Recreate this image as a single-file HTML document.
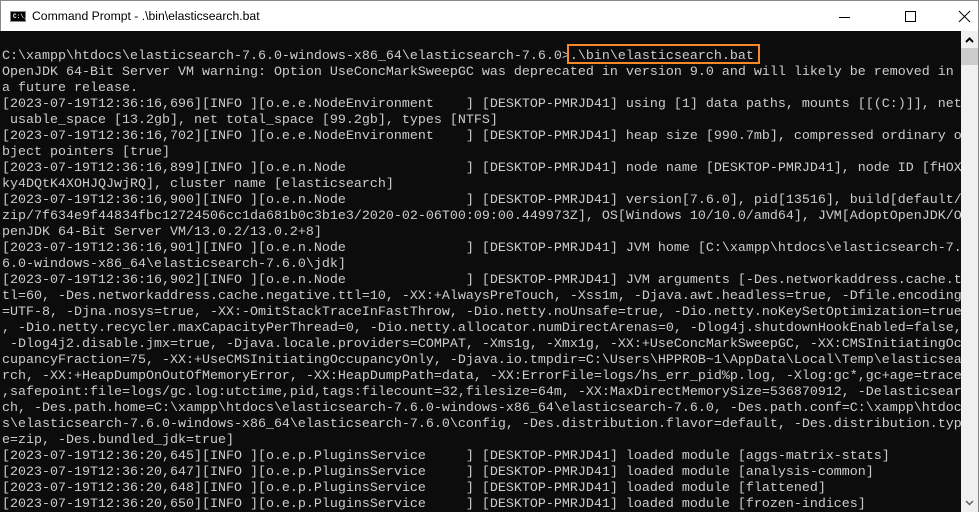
<!DOCTYPE html>
<html><head><meta charset="utf-8"><style>
*{margin:0;padding:0;box-sizing:border-box}
body{width:979px;height:512px;overflow:hidden;background:#fff;position:relative;font-family:"Liberation Sans",sans-serif}
#title{position:absolute;left:0;top:0;width:979px;height:31px;background:#fff;border:1px solid #888;border-bottom:none}
#title .t{position:absolute;left:31px;top:8px;font-size:12.2px;color:#000}
#icon{position:absolute;left:9px;top:10px;width:16px;height:11px;background:#000;border:1px solid #888}
#icon span{position:absolute;left:2px;top:1px;color:#fff;font:bold 6px "Liberation Mono",monospace}
#con{position:absolute;left:0;top:31px;width:961px;height:481px;background:#0c0c0c;overflow:hidden}
pre{position:absolute;left:2px;top:18px;font-family:"Liberation Mono",monospace;font-size:13.33px;line-height:16px;color:#cccccc;white-space:pre}
#sb{position:absolute;left:961px;top:31px;width:17px;height:481px;background:#f0f0f0}
#thumb{position:absolute;left:961px;top:48px;width:17px;height:17px;background:#cdcdcd}
#rb{position:absolute;left:978px;top:0;width:1px;height:512px;background:#888}
#box{position:absolute;left:567px;top:44px;width:193px;height:20px;border:2px solid #f5882b}
</style></head><body>
<div id="title"><div id="icon"><span>C:\_</span></div><div class="t">Command Prompt - .\bin\elasticsearch.bat</div>
<svg style="position:absolute;left:835px;top:8px" width="140" height="16">
<line x1="3" y1="8.5" x2="14" y2="8.5" stroke="#000" stroke-width="1"/>
<rect x="69.5" y="2.5" width="10" height="10" fill="none" stroke="#000"/>
<line x1="123" y1="2" x2="134" y2="13" stroke="#000"/><line x1="134" y1="2" x2="123" y2="13" stroke="#000"/>
</svg></div>
<div id="con"><pre>C:\xampp\htdocs\elasticsearch-7.6.0-windows-x86_64\elasticsearch-7.6.0&gt;.\bin\elasticsearch.bat
OpenJDK 64-Bit Server VM warning: Option UseConcMarkSweepGC was deprecated in version 9.0 and will likely be removed in
a future release.
[2023-07-19T12:36:16,696][INFO ][o.e.e.NodeEnvironment    ] [DESKTOP-PMRJD41] using [1] data paths, mounts [[(C:)]], net
 usable_space [13.2gb], net total_space [99.2gb], types [NTFS]
[2023-07-19T12:36:16,702][INFO ][o.e.e.NodeEnvironment    ] [DESKTOP-PMRJD41] heap size [990.7mb], compressed ordinary o
bject pointers [true]
[2023-07-19T12:36:16,899][INFO ][o.e.n.Node               ] [DESKTOP-PMRJD41] node name [DESKTOP-PMRJD41], node ID [fHOX
ky4DQtK4XOHJQJwjRQ], cluster name [elasticsearch]
[2023-07-19T12:36:16,900][INFO ][o.e.n.Node               ] [DESKTOP-PMRJD41] version[7.6.0], pid[13516], build[default/
zip/7f634e9f44834fbc12724506cc1da681b0c3b1e3/2020-02-06T00:09:00.449973Z], OS[Windows 10/10.0/amd64], JVM[AdoptOpenJDK/O
penJDK 64-Bit Server VM/13.0.2/13.0.2+8]
[2023-07-19T12:36:16,901][INFO ][o.e.n.Node               ] [DESKTOP-PMRJD41] JVM home [C:\xampp\htdocs\elasticsearch-7.
6.0-windows-x86_64\elasticsearch-7.6.0\jdk]
[2023-07-19T12:36:16,902][INFO ][o.e.n.Node               ] [DESKTOP-PMRJD41] JVM arguments [-Des.networkaddress.cache.t
tl=60, -Des.networkaddress.cache.negative.ttl=10, -XX:+AlwaysPreTouch, -Xss1m, -Djava.awt.headless=true, -Dfile.encoding
=UTF-8, -Djna.nosys=true, -XX:-OmitStackTraceInFastThrow, -Dio.netty.noUnsafe=true, -Dio.netty.noKeySetOptimization=true
, -Dio.netty.recycler.maxCapacityPerThread=0, -Dio.netty.allocator.numDirectArenas=0, -Dlog4j.shutdownHookEnabled=false,
 -Dlog4j2.disable.jmx=true, -Djava.locale.providers=COMPAT, -Xms1g, -Xmx1g, -XX:+UseConcMarkSweepGC, -XX:CMSInitiatingOc
cupancyFraction=75, -XX:+UseCMSInitiatingOccupancyOnly, -Djava.io.tmpdir=C:\Users\HPPROB~1\AppData\Local\Temp\elasticsea
rch, -XX:+HeapDumpOnOutOfMemoryError, -XX:HeapDumpPath=data, -XX:ErrorFile=logs/hs_err_pid%p.log, -Xlog:gc*,gc+age=trace
,safepoint:file=logs/gc.log:utctime,pid,tags:filecount=32,filesize=64m, -XX:MaxDirectMemorySize=536870912, -Delasticsear
ch, -Des.path.home=C:\xampp\htdocs\elasticsearch-7.6.0-windows-x86_64\elasticsearch-7.6.0, -Des.path.conf=C:\xampp\htdoc
s\elasticsearch-7.6.0-windows-x86_64\elasticsearch-7.6.0\config, -Des.distribution.flavor=default, -Des.distribution.typ
e=zip, -Des.bundled_jdk=true]
[2023-07-19T12:36:20,645][INFO ][o.e.p.PluginsService     ] [DESKTOP-PMRJD41] loaded module [aggs-matrix-stats]
[2023-07-19T12:36:20,647][INFO ][o.e.p.PluginsService     ] [DESKTOP-PMRJD41] loaded module [analysis-common]
[2023-07-19T12:36:20,648][INFO ][o.e.p.PluginsService     ] [DESKTOP-PMRJD41] loaded module [flattened]
[2023-07-19T12:36:20,650][INFO ][o.e.p.PluginsService     ] [DESKTOP-PMRJD41] loaded module [frozen-indices]</pre></div>
<div id="box"></div>
<div id="sb"></div><div id="thumb"></div>
<svg style="position:absolute;left:961px;top:35px" width="17" height="10"><polyline points="5,7 8.5,3.5 12,7" fill="none" stroke="#000" stroke-width="2"/></svg>
<svg style="position:absolute;left:961px;top:498px" width="17" height="10"><polyline points="5,3 8.5,6.5 12,3" fill="none" stroke="#606060" stroke-width="1.5"/></svg>
<div id="rb"></div>
</body></html>
